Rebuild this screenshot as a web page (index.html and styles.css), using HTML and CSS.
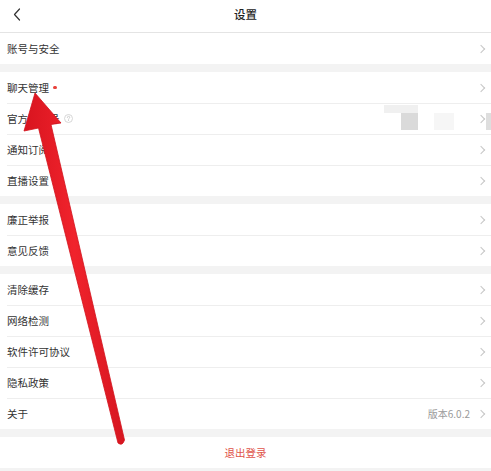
FILE: index.html
```html
<!DOCTYPE html>
<html lang="zh-CN">
<head>
<meta charset="utf-8">
<title>设置</title>
<link rel="stylesheet" href="styles.css">
</head>
<body>
<div class="page">
  <header class="nav">
    <span class="back">
      <svg width="8" height="13" viewBox="0 0 8 13"><path d="M6.5 1 L1.5 6.5 L6.5 12" fill="none" stroke="#333" stroke-width="1.2" stroke-linecap="round" stroke-linejoin="round"/></svg>
    </span>
    <h1 class="title">设置</h1>
    <span class="nav-spacer"></span>
  </header>

  <section class="group">
    <div class="row"><span class="label">账号与安全</span><span class="chev"></span></div>
  </section>

  <section class="group">
    <div class="row"><span class="label">聊天管理</span><span class="dot"></span><span class="chev"></span></div>
    <div class="row"><span class="label">官方消息号</span><span class="qmark"><svg width="9" height="9" viewBox="0 0 9 9"><circle cx="4.5" cy="4.5" r="4" fill="none" stroke="#cccccc" stroke-width="0.8"/><path d="M3.3 3.5 Q3.3 2.3 4.5 2.3 Q5.7 2.3 5.7 3.4 Q5.7 4.1 4.9 4.5 Q4.5 4.8 4.5 5.4" fill="none" stroke="#c4c4c4" stroke-width="0.8" stroke-linecap="round"/><circle cx="4.5" cy="6.6" r="0.5" fill="#c4c4c4"/></svg></span><span class="chev"></span></div>
    <div class="row"><span class="label">通知订阅</span><span class="chev"></span></div>
    <div class="row"><span class="label">直播设置</span><span class="chev"></span></div>
  </section>

  <section class="group">
    <div class="row"><span class="label">廉正举报</span><span class="chev"></span></div>
    <div class="row"><span class="label">意见反馈</span><span class="chev"></span></div>
  </section>

  <section class="group">
    <div class="row"><span class="label">清除缓存</span><span class="chev"></span></div>
    <div class="row"><span class="label">网络检测</span><span class="chev"></span></div>
    <div class="row"><span class="label">软件许可协议</span><span class="chev"></span></div>
    <div class="row"><span class="label">隐私政策</span><span class="chev"></span></div>
    <div class="row"><span class="label">关于</span><span class="value">版本6.0.2</span><span class="chev"></span></div>
  </section>

  <section class="group">
    <div class="row logout">退出登录</div>
  </section>

  <div class="mosaic">
    <span class="m m1"></span>
    <span class="m m2"></span>
    <span class="m m3"></span>
    <span class="m m4"></span>
  </div>

  <svg class="arrow" width="491" height="471" viewBox="0 0 491 471">
    <defs>
      <linearGradient id="ag" x1="0" y1="0" x2="1" y2="0">
        <stop offset="0" stop-color="#d8141f"/>
        <stop offset="0.5" stop-color="#f0232c"/>
        <stop offset="1" stop-color="#d61620"/>
      </linearGradient>
    </defs>
    <path d="M35 93 L61 123 L51 124.5 L124.5 440 Q122.5 446.5 118 443 L38.5 128 L24 131 Z" fill="url(#ag)" stroke="#d3121c" stroke-width="0.8" stroke-linejoin="round"/>
  </svg>
</div>
</body>
</html>
```

FILE: styles.css
```css
html, body {
  margin: 0;
  padding: 0;
}

body {
  background: #f3f3f3;
  font-family: "Noto Sans CJK SC", "Noto Sans", sans-serif;
  color: #333;
}

.page {
  position: relative;
  width: 491px;
  height: 471px;
  overflow: hidden;
  background: #f3f3f3;
}

.nav {
  height: 33px;
  background: #fff;
  border-bottom: 1px solid #e4e4e4;
  display: flex;
  align-items: flex-start;
  padding-top: 5px;
  box-sizing: border-box;
}

.back {
  width: 30px;
  padding-left: 13px;
  height: 18px;
  display: flex;
  align-items: center;
}

.title {
  flex: 1;
  margin: 0;
  text-align: center;
  font-size: 11.5px;
  font-weight: 500;
  line-height: 18px;
  color: #222;
  padding-right: 43px;
}

.nav-spacer {
  width: 0;
}

.group {
  background: #fff;
  margin-bottom: 8px;
}

.row {
  position: relative;
  height: 31px;
  display: flex;
  align-items: center;
  padding: 0 4px 0 7px;
  font-size: 10.5px;
  color: #333;
}

.row + .row::before {
  content: "";
  position: absolute;
  top: 0;
  left: 7px;
  right: 0;
  height: 1px;
  background: #eeeeee;
}

.label {
  flex: none;
}

.dot {
  width: 3.5px;
  height: 3.5px;
  border-radius: 50%;
  background: #e8413b;
  margin-left: 4px;
}

.qmark {
  display: flex;
  margin-left: 4px;
}

.value {
  margin-left: auto;
  font-size: 10px;
  color: #9a9a9a;
  margin-right: 8px;
  font-family: "Noto Sans CJK SC", "Liberation Sans", sans-serif;
}

.chev {
  margin-left: auto;
  width: 5px;
  height: 5px;
  border-top: 1px solid #c6c6c6;
  border-right: 1px solid #c6c6c6;
  transform: rotate(45deg);
  margin-right: 3px;
}

.value + .chev {
  margin-left: 0;
}

.logout {
  justify-content: center;
  color: #e0534a;
  padding: 0;
}

.mosaic .m {
  position: absolute;
  display: block;
}

.m1 { left: 384px; top: 105px; width: 34px; height: 8px; background: #f0f0f0; }
.m2 { left: 401px; top: 113px; width: 17px; height: 17px; background: #dadada; }
.m3 { left: 434px; top: 113px; width: 20px; height: 17px; background: #f6f6f6; }
.m4 { left: 486px; top: 113px; width: 5px; height: 17px; background: #dedede; }

.arrow {
  position: absolute;
  left: 0;
  top: 0;
  pointer-events: none;
}
```
